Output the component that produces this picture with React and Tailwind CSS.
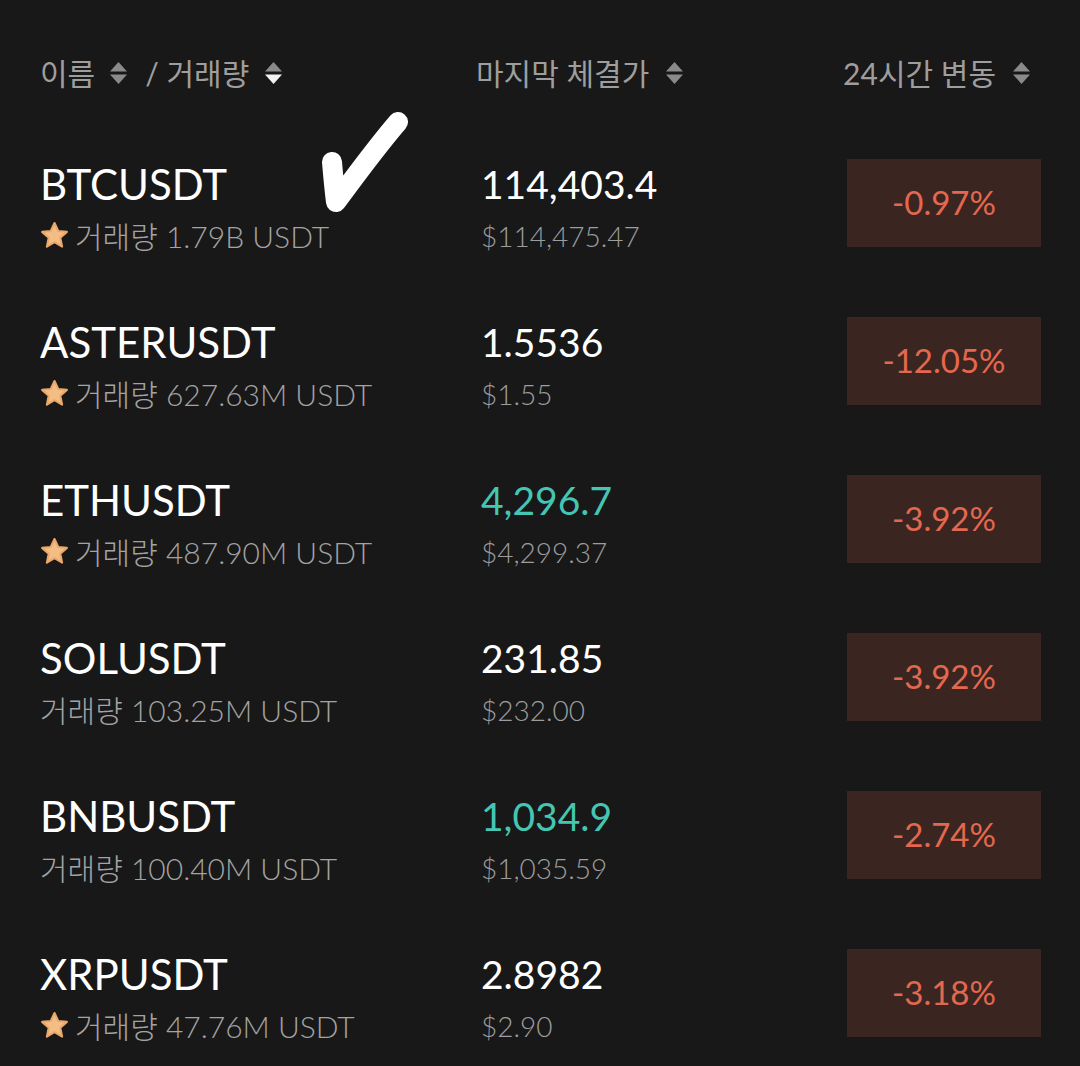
import React from 'react';

const rows = [
  { name: 'BTCUSDT', star: true, vol: '1.79B', price: '114,403.4', up: false, usd: '$114,475.47', change: '-0.97%' },
  { name: 'ASTERUSDT', star: true, vol: '627.63M', price: '1.5536', up: false, usd: '$1.55', change: '-12.05%' },
  { name: 'ETHUSDT', star: true, vol: '487.90M', price: '4,296.7', up: true, usd: '$4,299.37', change: '-3.92%' },
  { name: 'SOLUSDT', star: false, vol: '103.25M', price: '231.85', up: false, usd: '$232.00', change: '-3.92%' },
  { name: 'BNBUSDT', star: false, vol: '100.40M', price: '1,034.9', up: true, usd: '$1,035.59', change: '-2.74%' },
  { name: 'XRPUSDT', star: true, vol: '47.76M', price: '2.8982', up: false, usd: '$2.90', change: '-3.18%' },
];

const SortIcon = ({ active }) => (
  <svg width="19" height="24" viewBox="0 0 19 24" className="shrink-0">
    <path d="M9.5 1 L18 10.5 L1 10.5 Z" fill="#8a8a8a" />
    <path d="M1 13.5 L18 13.5 L9.5 23 Z" fill={active ? '#f2f2f2' : '#8a8a8a'} />
  </svg>
);

const Star = () => (
  <svg width="31" height="31" viewBox="0 0 24 24" className="shrink-0">
    <path
      d="M12 2.3 L14.9 8.5 L21.6 9.2 L16.5 13.8 L17.9 20.6 L12 17.1 L6.1 20.6 L7.5 13.8 L2.4 9.2 L9.1 8.5 Z"
      fill="#f4bd86"
      stroke="#eaa86b"
      strokeWidth="1.6"
      strokeLinejoin="round"
    />
  </svg>
);

const App = () => {
  return (
    <div
      className="min-h-[1066px] w-[1080px] bg-[#181818] pl-[40px] pr-[39px] pt-[53px] overflow-hidden"
      style={{ fontFamily: 'Lato, "Noto Sans CJK KR", sans-serif' }}
    >
      {/* Header */}
      <div className="flex items-center h-[40px] mb-[65px] text-[30px] text-[#9e9e9e]">
        <div className="w-[436px] flex items-center">
          <span>이름</span>
          <span className="ml-[14px]"><SortIcon /></span>
          <span className="ml-[17px]">/ 거래량</span>
          <span className="ml-[15px]"><SortIcon active /></span>
        </div>
        <div className="flex-1 flex items-center">
          <span>마지막 체결가</span>
          <span className="ml-[16px]"><SortIcon /></span>
        </div>
        <div className="flex items-center pr-[10px]">
          <span>24시간 변동</span>
          <span className="ml-[16px]"><SortIcon /></span>
        </div>
      </div>

      {/* Rows */}
      {rows.map((r, i) => (
        <div key={r.name} className="relative flex items-start h-[158px]">
          <div className="w-[441px]">
            <div className="h-[52px] leading-[52px] text-[42px] text-white">{r.name}</div>
            <div className="h-[52px] flex items-center text-[30px] font-light text-[#a3a3a3]">
              {r.star && <span className="mr-[5px] -ml-[1px] -mt-[2px]"><Star /></span>}
              <span>거래량 {r.vol} USDT</span>
            </div>
          </div>
          <div className="flex-1">
            <div className={`h-[52px] leading-[52px] text-[39px] ${r.up ? 'text-[#45c6b3]' : 'text-white'}`}>
              {r.price}
            </div>
            <div className="h-[52px] leading-[52px] text-[28px] font-light text-[#9d9d9d]">{r.usd}</div>
          </div>
          <div className="mt-[1px] w-[194px] h-[88px] bg-[#3b2520] flex items-center justify-center text-[33px] text-[#e4684f]">
            {r.change}
          </div>
          {i === 0 && (
            <svg
              className="absolute left-[270px] -top-[48px]"
              width="110"
              height="115"
              viewBox="0 0 110 115"
            >
              <path
                d="M22 52 C23 64 24 76 26 92 C44 68 64 40 88 12"
                fill="none"
                stroke="#ffffff"
                strokeWidth="20"
                strokeLinecap="round"
                strokeLinejoin="round"
              />
            </svg>
          )}
        </div>
      ))}
    </div>
  );
};

export default App;
